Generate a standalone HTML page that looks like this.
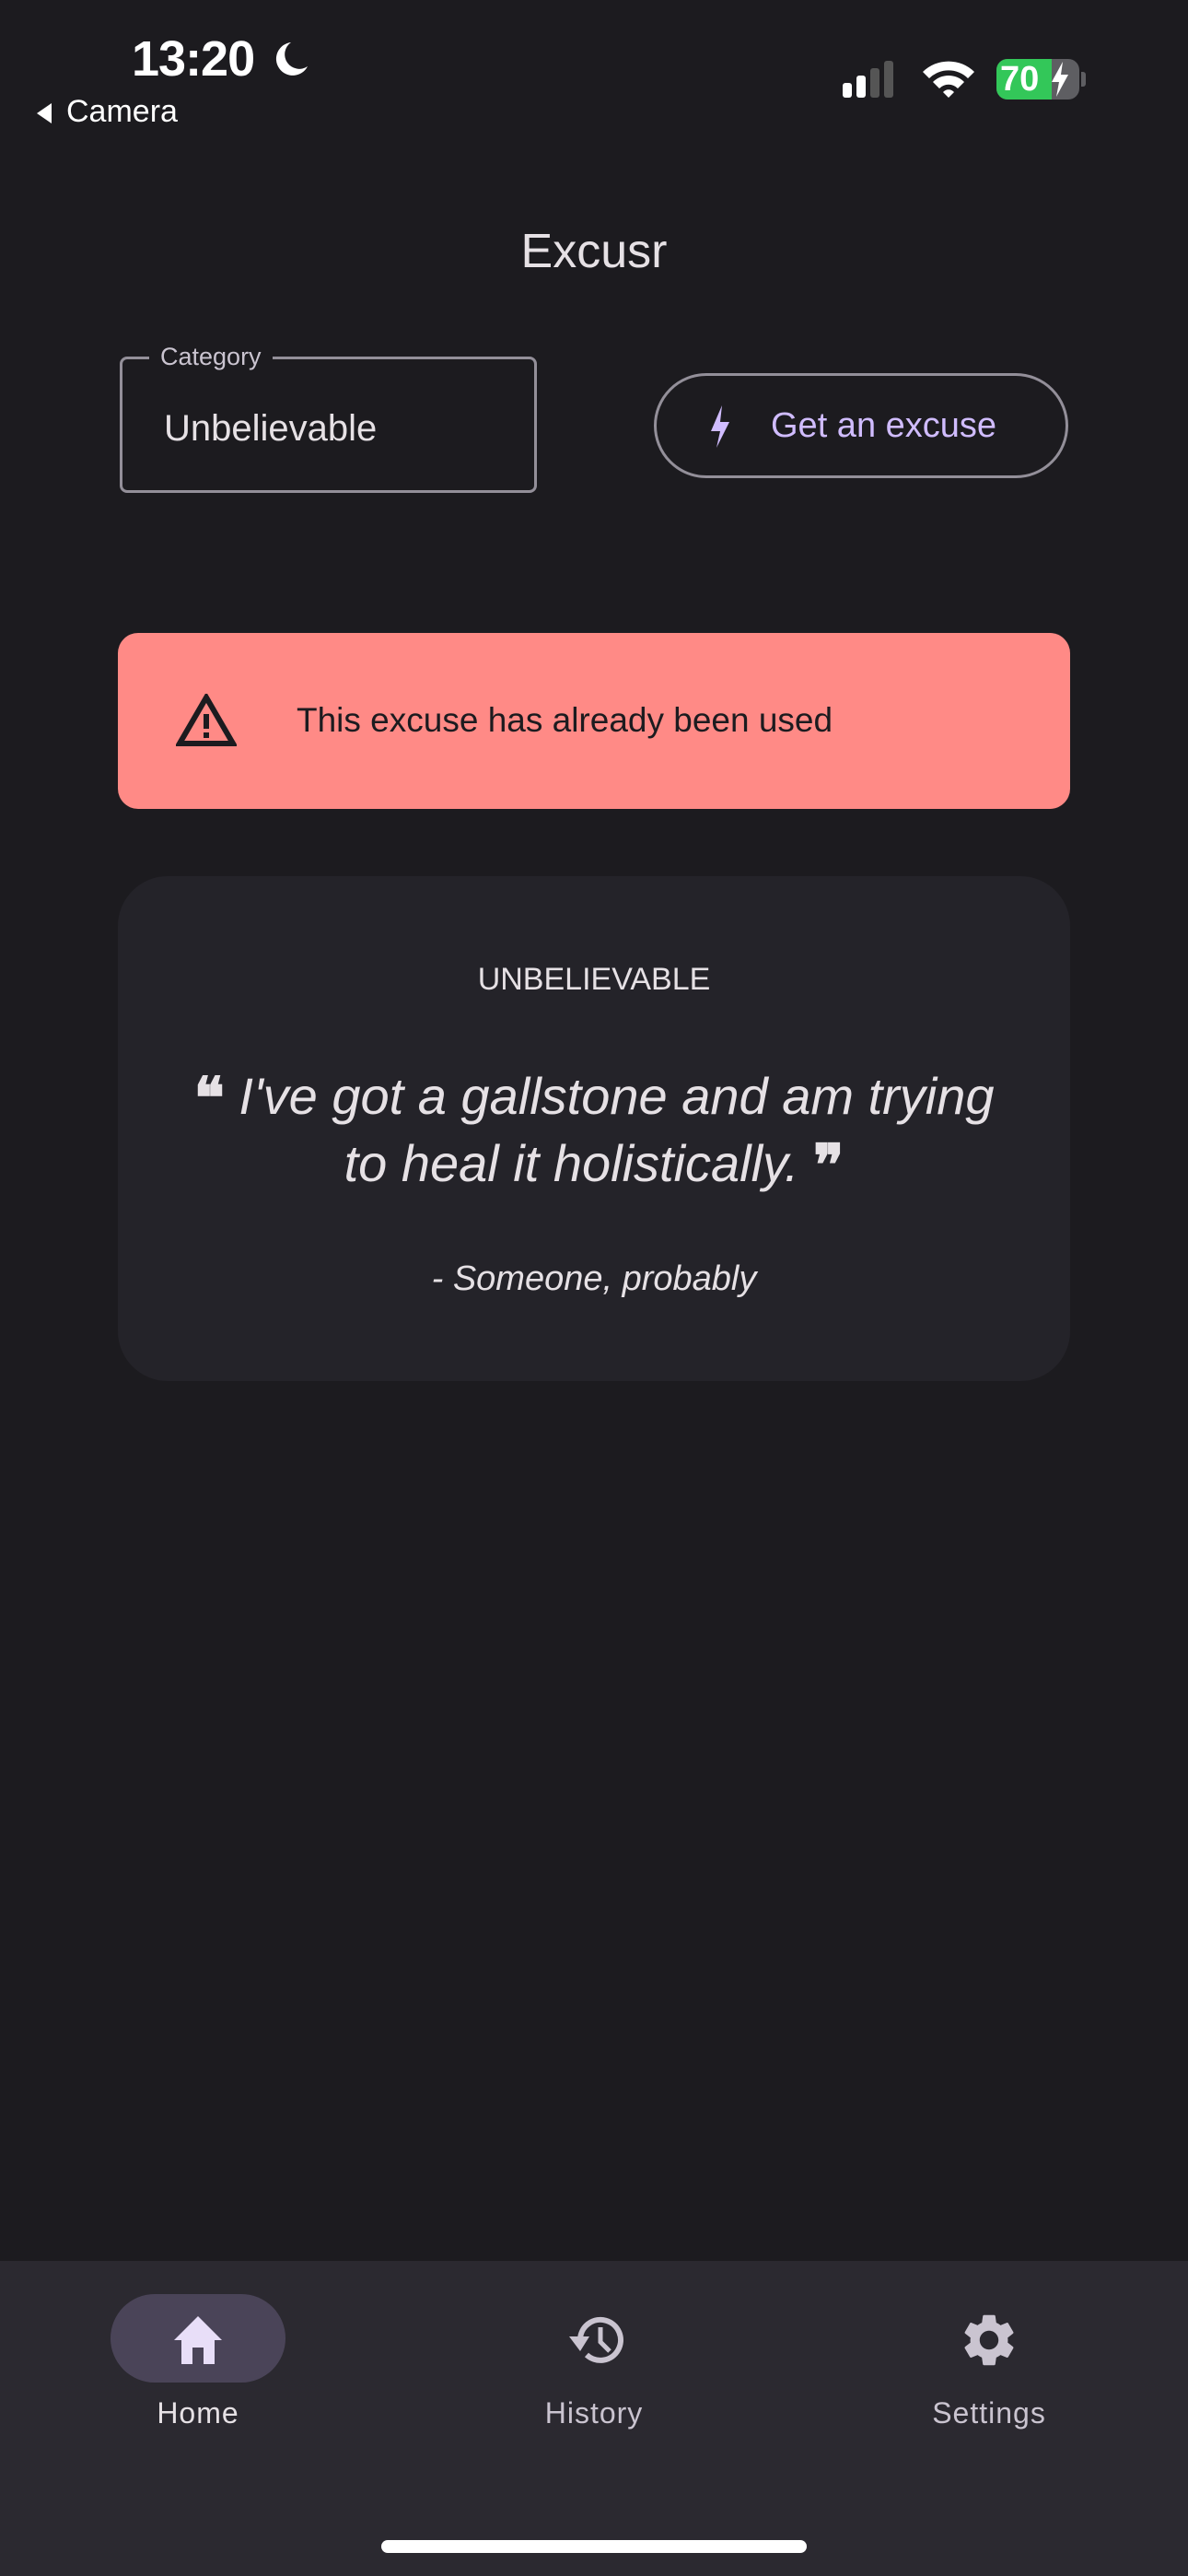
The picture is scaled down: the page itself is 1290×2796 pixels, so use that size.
<!DOCTYPE html>
<html><head><meta charset="utf-8"><style>
*{margin:0;padding:0;box-sizing:border-box}
body{width:1290px;height:2796px;background:#1c1b1f;font-family:"Liberation Sans",sans-serif;position:relative;overflow:hidden;color:#e6e1e5}
.a{position:absolute}
.c{text-align:center}
</style></head><body>
<div class="a" style="left:143px;top:33px;font-size:54px;font-weight:bold;color:#fff;letter-spacing:-1px">13:20</div>
<svg class="a" style="left:294px;top:42px" width="44" height="44" viewBox="0 0 44 44"><path d="M22 4 A18 18 0 1 0 40 30 A15 15 0 0 1 22 4Z" fill="#fff"/></svg>
<svg class="a" style="left:36px;top:110px" width="24" height="26" viewBox="0 0 24 26"><path d="M20 2 L20 24 L4 13Z" fill="#fff"/></svg>
<div class="a" style="left:72px;top:102px;font-size:34px;color:#fff">Camera</div>
<!-- signal -->
<div class="a" style="left:915px;top:90px;width:10px;height:16px;background:#fff;border-radius:3px"></div>
<div class="a" style="left:930px;top:82px;width:10px;height:24px;background:#fff;border-radius:3px"></div>
<div class="a" style="left:945px;top:74px;width:10px;height:32px;background:#555;border-radius:3px"></div>
<div class="a" style="left:960px;top:66px;width:10px;height:40px;background:#555;border-radius:3px"></div>
<svg class="a" style="left:1000px;top:62px" width="60" height="46" viewBox="0 0 60 46"><path d="M2 16 A40 40 0 0 1 58 16 L51 23 A30 30 0 0 0 9 23Z M13 27 A24 24 0 0 1 47 27 L40 34 A14 14 0 0 0 20 34Z M24 38 A8 8 0 0 1 36 38 L30 44Z" fill="#fff"/></svg>
<div class="a" style="left:1082px;top:64px;width:90px;height:44px;border-radius:12px;background:#5e5e62;overflow:hidden"><div style="width:60px;height:44px;background:#33c759"></div></div>
<div class="a" style="left:1086px;top:64px;font-size:38px;font-weight:bold;color:#fff;line-height:44px">70</div>
<svg class="a" style="left:1140px;top:67px" width="22" height="38" viewBox="0 0 22 38"><path d="M14 0 L2 22 L10 22 L7 38 L20 14 L12 14Z" fill="#fff"/></svg>
<div class="a" style="left:1174px;top:78px;width:5px;height:16px;background:#5e5e62;border-radius:0 3px 3px 0"></div>

<div class="a c" style="left:0;width:1290px;top:240px;font-size:52px;line-height:66px">Excusr</div>

<div class="a" style="left:130px;top:387px;width:453px;height:148px;border:3px solid #938f99;border-radius:8px"></div>
<div class="a" style="left:162px;top:370px;padding:0 12px;background:#1c1b1f;font-size:27px;color:#cac4d0;line-height:34px">Category</div>
<div class="a" style="left:178px;top:441px;font-size:40px;line-height:48px">Unbelievable</div>

<div class="a" style="left:710px;top:405px;width:450px;height:114px;border:3px solid #938f99;border-radius:57px"></div>
<svg class="a" style="left:768px;top:440px" width="28" height="46" viewBox="0 0 28 46"><path d="M16 0 L4 28 L14 28 L10 46 L24 18 L14 18Z" fill="#d0bcff"/></svg>
<div class="a" style="left:837px;top:439px;font-size:38px;line-height:46px;color:#d0bcff">Get an excuse</div>

<div class="a" style="left:128px;top:687px;width:1034px;height:191px;background:#ff8a86;border-radius:22px"></div>
<svg class="a" style="left:191px;top:753px" width="66" height="58" viewBox="0 0 66 58"><path d="M33 4 L62 54 L4 54Z" fill="none" stroke="#1c1b1f" stroke-width="6" stroke-linejoin="miter"/><rect x="30" y="22" width="6" height="16" fill="#1c1b1f"/><rect x="30" y="42" width="6" height="6" fill="#1c1b1f"/></svg>
<div class="a" style="left:322px;top:760px;font-size:37px;line-height:44px;color:#1c1b1f">This excuse has already been used</div>

<div class="a" style="left:128px;top:951px;width:1034px;height:548px;background:#242329;border-radius:54px"></div>
<div class="a c" style="left:128px;width:1034px;top:1042px;font-size:34px;line-height:42px;color:#e6e1e5">UNBELIEVABLE</div>
<div class="a c" style="left:180px;width:930px;top:1155px;font-size:56px;line-height:70px;font-style:italic;color:#e6e1e5"><span style="font-style:normal;font-weight:bold;font-size:62px;vertical-align:-4px">❝</span> I've got a gallstone and am trying to heal it holistically. <span style="font-style:normal;font-weight:bold;font-size:62px;vertical-align:-4px">❞</span></div>
<div class="a c" style="left:128px;width:1034px;top:1366px;font-size:38px;line-height:44px;font-style:italic;color:#e6e1e5">- Someone, probably</div>

<div class="a" style="left:0;top:2454px;width:1290px;height:342px;background:#2b2930"></div>
<div class="a" style="left:120px;top:2490px;width:190px;height:96px;background:#4a4458;border-radius:48px"></div>
<svg class="a" style="left:183px;top:2510px" width="64" height="58" viewBox="0 0 64 58"><path d="M32 4 L58 30 L50 30 L50 56 L38 56 L38 38 L26 38 L26 56 L14 56 L14 30 L6 30Z" fill="#e8def8"/></svg>
<svg class="a" style="left:610px;top:2506px" width="70" height="66" viewBox="0 0 70 66"><path d="M20 33 A22 22 0 1 1 27 50" fill="none" stroke="#cac4d0" stroke-width="6"/><path d="M8 30 L20 46 L30 30Z" fill="#cac4d0"/><path d="M42 20 L42 36 L52 46" fill="none" stroke="#cac4d0" stroke-width="5"/></svg>
<svg class="a" style="left:1040px;top:2506px" width="68" height="68" viewBox="0 0 24 24"><path fill="#cac4d0" d="M19.14 12.94c.04-.3.06-.61.06-.94 0-.32-.02-.64-.07-.94l2.03-1.58a.49.49 0 0 0 .12-.61l-1.920-3.32a.49.49 0 0 0-.59-.22l-2.39.96c-.5-.38-1.03-.7-1.62-.94l-.36-2.54a.48.48 0 0 0-.48-.41h-3.84c-.24 0-.43.17-.47.41l-.36 2.540c-.59.24-1.13.57-1.62.94l-2.39-.96c-.22-.08-.47 0-.59.22L2.74 8.87c-.12.21-.08.47.12.61l2.03 1.58c-.05.3-.09.63-.09.94s.02.64.07.94l-2.03 1.58a.49.49 0 0 0-.12.61l1.92 3.32c.12.22.37.29.59.22l2.39-.96c.5.38 1.03.7 1.62.94l.36 2.54c.05.24.24.41.48.41h3.84c.24 0 .44-.17.47-.41l.36-2.54c.59-.24 1.13-.56 1.62-.94l2.39.96c.22.08.47 0 .59-.22l1.92-3.32c.12-.22.07-.47-.12-.61l-2.01-1.58zM12 15.6c-1.98 0-3.6-1.62-3.6-3.6s1.62-3.6 3.6-3.6 3.6 1.62 3.6 3.6-1.62 3.6-3.6 3.6z"/></svg>
<div class="a c" style="left:65px;width:300px;top:2598px;font-size:32px;line-height:42px;color:#e6e1e5;letter-spacing:1px">Home</div>
<div class="a c" style="left:495px;width:300px;top:2598px;font-size:32px;line-height:42px;color:#cac4d0;letter-spacing:1px">History</div>
<div class="a c" style="left:924px;width:300px;top:2598px;font-size:32px;line-height:42px;color:#cac4d0;letter-spacing:1px">Settings</div>
<div class="a" style="left:414px;top:2757px;width:462px;height:14px;background:#fff;border-radius:7px"></div>
</body></html>
